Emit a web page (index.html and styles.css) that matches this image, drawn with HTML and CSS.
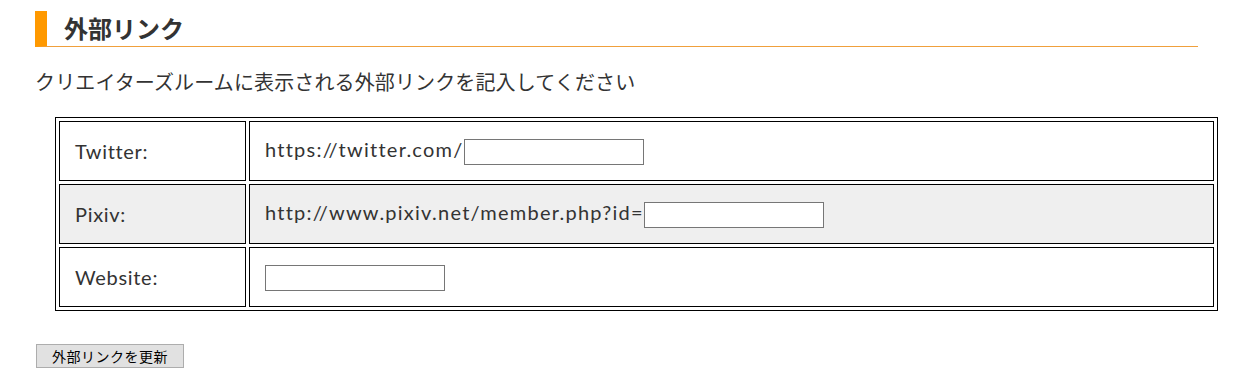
FILE: index.html
```html
<!DOCTYPE html>
<html lang="ja">
<head>
  <meta charset="UTF-8">
  <title>外部リンク</title>
  <link rel="stylesheet" href="styles.css">
</head>
<body>
  <div class="wrap">
    <h2 class="title">外部リンク</h2>

    <p class="lead">クリエイターズルームに表示される外部リンクを記入してください</p>

    <form class="links">
      <table class="linkTable">
        <tr>
          <td class="label">Twitter:</td>
          <td class="field">https://twitter.com/<input type="text" class="box" name="twitter"></td>
        </tr>
        <tr class="alt">
          <td class="label">Pixiv:</td>
          <td class="field">http://www.pixiv.net/member.php?id=<input type="text" class="box" name="pixiv"></td>
        </tr>
        <tr>
          <td class="label">Website:</td>
          <td class="field"><input type="text" class="box" name="website"></td>
        </tr>
      </table>

      <button type="button" class="submit">外部リンクを更新</button>
    </form>
  </div>
</body>
</html>
```

FILE: styles.css
```css
body {
  margin: 0;
  font-family: Lato, "Noto Sans CJK JP", sans-serif;
  color: #333;
  background: #fff;
}

.wrap {
  padding: 11px 0 0 35px;
  width: 1163px;
}

.title {
  margin: 0;
  height: 35px;
  line-height: 35px;
  padding-left: 17px;
  border-left: 12px solid #ff9900;
  border-bottom: 1px solid #f0a03c;
  font-size: 24px;
  font-weight: bold;
}

.lead {
  margin: 20px 0;
  font-size: 20px;
  line-height: 30px;
  letter-spacing: 0.13px;
}

.linkTable {
  margin-left: 20px;
  width: 1163px;
  border: 1px solid #000;
  border-spacing: 3px;
}

.linkTable td {
  border: 1px solid #000;
  height: 58px;
  padding: 0 15px;
  font-size: 20px;
}

.linkTable .label {
  width: 155px;
  letter-spacing: 0.7px;
}

.linkTable .field {
  letter-spacing: 1.25px;
}

.alt td {
  background: #efefef;
}

.box {
  width: 180px;
  height: 26px;
  box-sizing: border-box;
  border: 1px solid #767676;
  margin: 0;
  padding: 0;
  vertical-align: middle;
  background: #fff;
}

.submit {
  margin: 33px 0 0 1px;
  width: 148px;
  padding: 0;
  height: 24px;
  font-family: "Noto Sans CJK JP", sans-serif;
  font-size: 14px;
  letter-spacing: 0.5px;
  color: #000;
  background: #e1e1e1;
  border: 1px solid #adadad;
}
```
